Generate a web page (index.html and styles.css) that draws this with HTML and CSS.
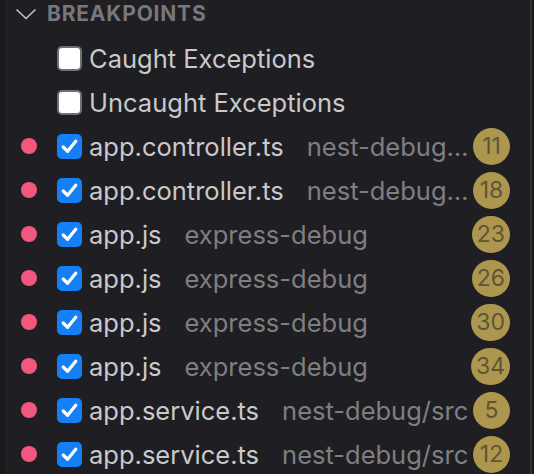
FILE: index.html
```html
<!DOCTYPE html>
<html>
<head>
<meta charset="utf-8">
<link rel="stylesheet" href="styles.css">
</head>
<body>
<div class="window">
  <div class="gutter"></div>
  <div class="panel">
    <div class="header">
      <svg class="chevron" width="22" height="12" viewBox="0 0 22 12"><polyline points="1.5,1.5 11,10.5 20.5,1.5" fill="none" stroke="#c4c4c4" stroke-width="1.6"/></svg>
      <span class="title">BREAKPOINTS</span>
    </div>
    <div class="list">
      <div class="row"><span class="dot none"></span><span class="cb"></span><span class="name">Caught Exceptions</span></div>
      <div class="row"><span class="dot none"></span><span class="cb"></span><span class="name">Uncaught Exceptions</span></div>
      <div class="row"><span class="dot"></span><span class="cb on"><svg viewBox="0 0 26 26"><polyline points="6.5,13.5 11,18 19.5,7.5" fill="none" stroke="#fff" stroke-width="3.4" stroke-linecap="round" stroke-linejoin="round"/></svg></span><span class="name">app.controller.ts</span><span class="desc">nest-debug/src</span><span class="badge">11</span></div>
      <div class="row"><span class="dot"></span><span class="cb on"><svg viewBox="0 0 26 26"><polyline points="6.5,13.5 11,18 19.5,7.5" fill="none" stroke="#fff" stroke-width="3.4" stroke-linecap="round" stroke-linejoin="round"/></svg></span><span class="name">app.controller.ts</span><span class="desc">nest-debug/src</span><span class="badge">18</span></div>
      <div class="row"><span class="dot"></span><span class="cb on"><svg viewBox="0 0 26 26"><polyline points="6.5,13.5 11,18 19.5,7.5" fill="none" stroke="#fff" stroke-width="3.4" stroke-linecap="round" stroke-linejoin="round"/></svg></span><span class="name">app.js</span><span class="desc">express-debug</span><span class="badge">23</span></div>
      <div class="row"><span class="dot"></span><span class="cb on"><svg viewBox="0 0 26 26"><polyline points="6.5,13.5 11,18 19.5,7.5" fill="none" stroke="#fff" stroke-width="3.4" stroke-linecap="round" stroke-linejoin="round"/></svg></span><span class="name">app.js</span><span class="desc">express-debug</span><span class="badge">26</span></div>
      <div class="row"><span class="dot"></span><span class="cb on"><svg viewBox="0 0 26 26"><polyline points="6.5,13.5 11,18 19.5,7.5" fill="none" stroke="#fff" stroke-width="3.4" stroke-linecap="round" stroke-linejoin="round"/></svg></span><span class="name">app.js</span><span class="desc">express-debug</span><span class="badge">30</span></div>
      <div class="row"><span class="dot"></span><span class="cb on"><svg viewBox="0 0 26 26"><polyline points="6.5,13.5 11,18 19.5,7.5" fill="none" stroke="#fff" stroke-width="3.4" stroke-linecap="round" stroke-linejoin="round"/></svg></span><span class="name">app.js</span><span class="desc">express-debug</span><span class="badge">34</span></div>
      <div class="row"><span class="dot"></span><span class="cb on"><svg viewBox="0 0 26 26"><polyline points="6.5,13.5 11,18 19.5,7.5" fill="none" stroke="#fff" stroke-width="3.4" stroke-linecap="round" stroke-linejoin="round"/></svg></span><span class="name">app.service.ts</span><span class="desc">nest-debug/src</span><span class="badge">5</span></div>
      <div class="row"><span class="dot"></span><span class="cb on"><svg viewBox="0 0 26 26"><polyline points="6.5,13.5 11,18 19.5,7.5" fill="none" stroke="#fff" stroke-width="3.4" stroke-linecap="round" stroke-linejoin="round"/></svg></span><span class="name">app.service.ts</span><span class="desc">nest-debug/src</span><span class="badge">12</span></div>
    </div>
  </div>
  <div class="sash"></div>
  <div class="edge"></div>
</div>
</body>
</html>
```

FILE: styles.css
```css
html, body {
  margin: 0;
  padding: 0;
  background: #1f1e22;
}
body {
  font-family: Inter, "Liberation Sans", sans-serif;
  overflow: hidden;
}
.window {
  display: flex;
  width: 534px;
  height: 474px;
  overflow: hidden;
}
.gutter {
  width: 5px;
  flex: none;
  background: #19181b;
}
.panel {
  flex: 1;
  min-width: 0;
  background: #1f1e22;
}
.sash {
  width: 2px;
  flex: none;
  background: #323135;
}
.edge {
  width: 2px;
  flex: none;
  background: #18171a;
}
.header {
  height: 28px;
  display: flex;
  align-items: center;
  padding-left: 10px;
  margin-bottom: 8px;
}
.chevron {
  display: block;
  margin-right: 10px;
}
.title {
  font-size: 21px;
  font-weight: 700;
  color: #78777b;
  letter-spacing: 0.8px;
  line-height: 28px;
}
.list {
  display: flex;
  flex-direction: column;
}
.row {
  height: 44px;
  display: flex;
  align-items: center;
  padding-left: 16px;
  padding-right: 20px;
  white-space: nowrap;
}
.dot {
  width: 16px;
  height: 16px;
  border-radius: 50%;
  background: #f2587d;
  flex: none;
  margin-right: 20px;
}
.dot.none {
  background: transparent;
}
.cb {
  width: 25px;
  height: 25px;
  box-sizing: border-box;
  border: 2px solid #707073;
  border-radius: 5px;
  background: #ffffff;
  flex: none;
  margin-right: 7px;
}
.cb.on {
  background: #1580f5;
  border-color: #1580f5;
  position: relative;
}
.cb svg {
  position: absolute;
  left: -2px;
  top: -2px;
  width: 25px;
  height: 25px;
}
.name {
  font-size: 25.5px;
  color: #c9c9cb;
  flex: none;
}
.desc {
  font-size: 25.5px;
  color: #7f7e82;
  margin-left: 23px;
  margin-right: 2px;
  overflow: hidden;
  text-overflow: ellipsis;
  min-width: 0;
  flex: 0 1 auto;
}
.badge {
  margin-left: auto;
  flex: none;
  min-width: 37px;
  height: 37px;
  box-sizing: border-box;
  padding: 0 5px;
  border-radius: 19px;
  background: #ad974e;
  color: #5e5436;
  font-size: 23px;
  display: flex;
  align-items: center;
  justify-content: center;
}
```
